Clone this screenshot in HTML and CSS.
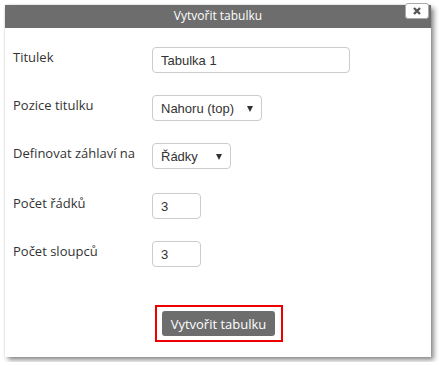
FILE: index.html
```html
<!DOCTYPE html>
<html>
<head>
  <meta charset="utf-8">
  <link rel="stylesheet" href="styles.css">
</head>
<body>
  <div class="dialog">
    <div class="dialog-title">
      Vytvořit tabulku
      <span class="close-btn" title="Zavřít">
        <svg viewBox="0 0 10 10">
          <path d="M2,2L8,8M8,2L2,8"/>
        </svg>
      </span>
    </div>

    <div class="dialog-body">
      <div class="form-row">
        <label>Titulek</label>
        <input class="field field-wide" type="text" value="Tabulka 1">
      </div>
      <div class="form-row">
        <label>Pozice titulku</label>
        <div class="select-wrap">
          <select class="field select-pos">
            <option>Nahoru (top)</option>
          </select>
        </div>
      </div>
      <div class="form-row">
        <label>Definovat záhlaví na</label>
        <div class="select-wrap">
          <select class="field select-head">
            <option>Řádky</option>
          </select>
        </div>
      </div>
      <div class="form-row row-gap">
        <label>Počet řádků</label>
        <input class="field field-num" type="text" value="3">
      </div>
      <div class="form-row">
        <label>Počet sloupců</label>
        <input class="field field-num" type="text" value="3">
      </div>

      <div class="actions">
        <div class="highlight">
          <button class="submit-btn">Vytvořit tabulku</button>
        </div>
      </div>
    </div>
  </div>
</body>
</html>
```

FILE: styles.css
```css
body {
  margin: 0;
  padding: 5px;
  background: #fff;
  font-family: 'Open Sans', sans-serif;
  color: #333;
}

.dialog {
  width: 426px;
  height: 352px;
  background: #fff;
  box-shadow: 3px 3px 5px rgba(0, 0, 0, 0.45), 0 0 2px rgba(0, 0, 0, 0.15);
  display: flex;
  flex-direction: column;
}

.dialog-title {
  position: relative;
  height: 23px;
  line-height: 22px;
  background: #6d6d6d;
  color: #fff;
  text-align: center;
  font-size: 12px;
}

.close-btn {
  position: absolute;
  top: -2px;
  right: 2px;
  box-sizing: border-box;
  width: 24px;
  height: 16px;
  background: #fff;
  border: 1px solid #aaa;
  border-radius: 3px;
  display: flex;
  align-items: center;
  justify-content: center;
}

.close-btn svg {
  width: 10px;
  height: 10px;
  stroke: #555;
  stroke-width: 2.4;
}

.dialog-body {
  padding: 19px 8px 0 8px;
  display: flex;
  flex-direction: column;
  gap: 22px;
}

.form-row {
  display: flex;
  align-items: flex-start;
}

.form-row label {
  width: 139px;
  font-size: 13px;
  line-height: 20px;
  flex-shrink: 0;
}

.row-gap {
  margin-top: 2px;
}

.field {
  box-sizing: border-box;
  height: 26px;
  margin: 0;
  padding: 0 8px;
  border: 1px solid #ccc;
  border-radius: 4px;
  background: #fff;
  font-family: 'Liberation Sans', Arial, sans-serif;
  font-size: 13px;
  color: #333;
  outline: none;
}

.field-wide {
  width: 198px;
}

.field-num {
  width: 49px;
}

.select-wrap {
  position: relative;
}

.select-wrap select {
  appearance: none;
  -webkit-appearance: none;
}

.select-wrap::after {
  content: "";
  position: absolute;
  right: 9px;
  top: 11px;
  border-left: 3px solid transparent;
  border-right: 3px solid transparent;
  border-top: 6px solid #333;
  pointer-events: none;
}

.select-pos {
  width: 110px;
}

.select-head {
  width: 79px;
}

.actions {
  display: flex;
  justify-content: center;
  margin-top: 16px;
  padding-left: 2px;
}

.highlight {
  border: 2px solid #e00;
  padding: 4px 6px 4px 5px;
}

.submit-btn {
  height: 25px;
  padding: 0 9px;
  background: #6d6d6d;
  border: none;
  border-radius: 3px;
  color: #fff;
  font-family: 'Open Sans', sans-serif;
  font-size: 13px;
  cursor: pointer;
}
```
